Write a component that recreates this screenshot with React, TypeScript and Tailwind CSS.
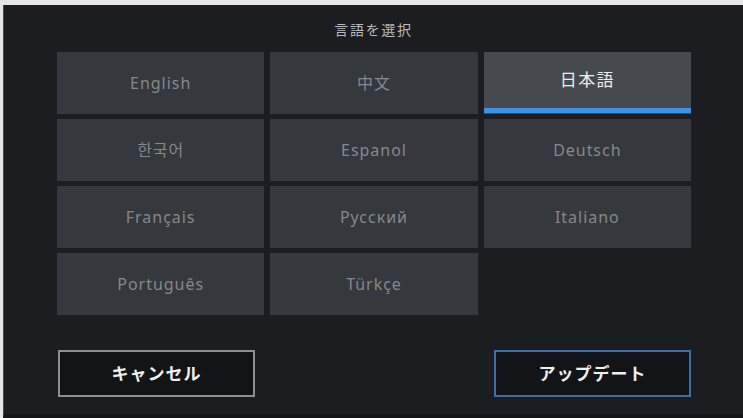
import React from 'react';

const languages = [
  'English', '中文', '日本語',
  '한국어', 'Espanol', 'Deutsch',
  'Français', 'Русский', 'Italiano',
  'Português', 'Türkçe',
];

const selected = '日本語';

export default function App() {
  return (
    <div
      className="w-[743px] h-[418px] bg-[#e6e6e6] pt-[5px] pl-[3px] overflow-hidden"
      style={{ fontFamily: '"Noto Sans", "Noto Sans CJK JP", sans-serif' }}
    >
      <div className="h-full flex flex-col bg-[#1b1d20] border-l border-[#4a4c50] border-b-[4px] border-b-[#141517]">
        {/* Title */}
        <div className="pt-[15px] text-center text-[14px] leading-[20px] text-[#b9bbbe] tracking-[0.12em]">
          言語を選択
        </div>

        {/* Language grid */}
        <div className="mt-[12px] ml-[53px] w-[634px] grid grid-cols-3 gap-x-[6px] gap-y-[5px]">
          {languages.map((lang) => {
            const isSelected = lang === selected;
            return (
              <div
                key={lang}
                className={
                  isSelected
                    ? 'relative h-[62px] flex items-center justify-center pb-[6px] bg-[#46494d] text-[#ececec] text-[17px] tracking-[0.08em]'
                    : 'h-[62px] flex items-center justify-center bg-[#35383c] text-[#85888c] text-[16px] tracking-[0.06em]'
                }
              >
                {lang}
                {isSelected && (
                  <div className="absolute left-0 right-0 bottom-0 h-[6px] bg-[#3b92e6] border-b border-[#1f4f85]" />
                )}
              </div>
            );
          })}
        </div>

        {/* Buttons */}
        <div className="mt-[35px] ml-[54px] w-[633px] flex justify-between">
          <button className="w-[197px] h-[47px] bg-[#131417] border-2 border-[#8d8f92] text-[#f0f0f0] text-[17px] font-semibold tracking-[0.06em]">
            キャンセル
          </button>
          <button className="w-[197px] h-[47px] bg-[#131417] border-2 border-[#3f6fa7] text-[#f0f0f0] text-[17px] font-semibold tracking-[0.06em]">
            アップデート
          </button>
        </div>
      </div>
    </div>
  );
}
